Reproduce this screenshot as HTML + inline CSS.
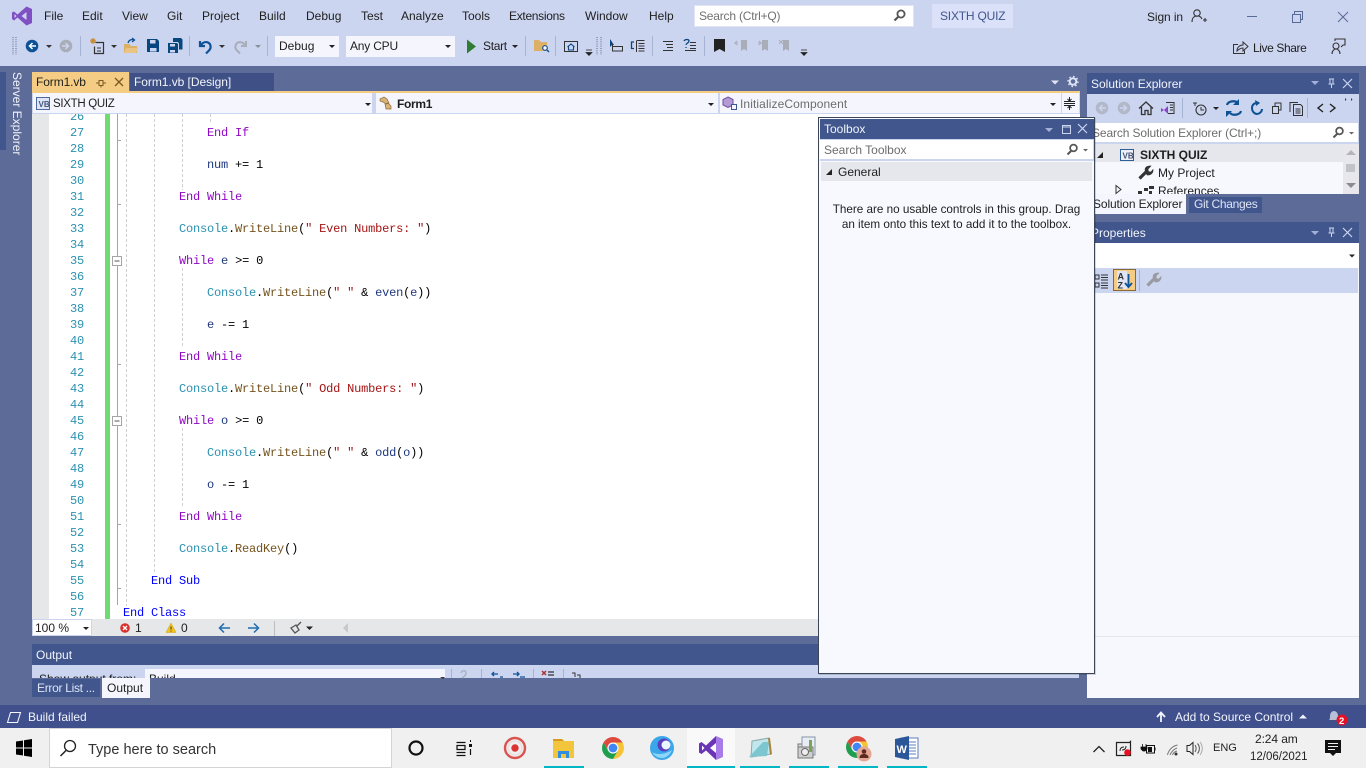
<!DOCTYPE html>
<html lang="en"><head><meta charset="utf-8"><title>SIXTH QUIZ - Visual Studio</title>
<style>
*{box-sizing:border-box}
html,body{margin:0;padding:0;width:1366px;height:768px;overflow:hidden;background:#5d6b99}
body{position:relative;font:12px "Liberation Sans",sans-serif;color:#1e1e1e}
.a{position:absolute}
.t{position:absolute;white-space:nowrap;line-height:16px;height:16px;font-size:12px}
.w{color:#f2f4fb}
.code{position:absolute;margin:0;font:12px/16px "Liberation Mono",monospace;letter-spacing:-.2px;color:#000}
.k{color:#8f08c4}.b{color:#0000ff}.c{color:#2b91af}.m{color:#74531f}.v{color:#1f377f}.s{color:#a31515}
svg{position:absolute;left:0;top:0;overflow:visible}
</style></head><body>

<!-- chrome bands -->
<div class="a" style="left:0;top:0;width:1366px;height:66px;background:#ccd5f0"></div>

<!-- menu -->
<span class="t" style="left:44px;top:8px">File</span>
<span class="t" style="left:82px;top:8px">Edit</span>
<span class="t" style="left:122px;top:8px">View</span>
<span class="t" style="left:167px;top:8px">Git</span>
<span class="t" style="left:202px;top:8px">Project</span>
<span class="t" style="left:259px;top:8px">Build</span>
<span class="t" style="left:306px;top:8px">Debug</span>
<span class="t" style="left:361px;top:8px">Test</span>
<span class="t" style="left:401px;top:8px">Analyze</span>
<span class="t" style="left:462px;top:8px">Tools</span>
<span class="t" style="left:509px;top:8px;letter-spacing:-.3px">Extensions</span>
<span class="t" style="left:585px;top:8px">Window</span>
<span class="t" style="left:649px;top:8px">Help</span>
<div class="a" style="left:694px;top:5px;width:220px;height:22px;background:#fff;border:1px solid #dfe3f2"></div>
<span class="t" style="left:699px;top:8px;color:#717171;letter-spacing:-.2px">Search (Ctrl+Q)</span>
<div class="a" style="left:932px;top:4px;width:81px;height:24px;background:#dae1f8"></div>
<span class="t" style="left:940px;top:8px;color:#40568d;letter-spacing:-.2px">SIXTH QUIZ</span>
<span class="t" style="left:1147px;top:9px;letter-spacing:-.1px">Sign in</span>

<!-- toolbar combos -->
<div class="a" style="left:275px;top:36px;width:64px;height:21px;background:#f5f6fd"></div>
<span class="t" style="left:279px;top:38px">Debug</span>
<div class="a" style="left:346px;top:36px;width:109px;height:21px;background:#f5f6fd"></div>
<span class="t" style="left:350px;top:38px;letter-spacing:-.2px">Any CPU</span>
<span class="t" style="left:483px;top:38px;letter-spacing:-.3px">Start</span>
<span class="t" style="left:1253px;top:40px;letter-spacing:-.4px">Live Share</span>

<!-- left strip -->
<div class="a" style="left:0;top:72px;width:6px;height:78px;background:#40568d"></div>
<div class="a" style="left:9px;top:72px;width:16px;height:78px;writing-mode:vertical-rl;color:#f2f4fb;font-size:12px;line-height:16px;white-space:nowrap">Server Explorer</div>

<!-- doc tabs -->
<div class="a" style="left:32px;top:72px;width:97px;height:20px;background:#f5cc84"></div>
<span class="t" style="left:36px;top:74px;letter-spacing:-.1px">Form1.vb</span>
<div class="a" style="left:130px;top:73px;width:144px;height:18px;background:#3e5085"></div>
<span class="t w" style="left:134px;top:74px;letter-spacing:-.05px">Form1.vb [Design]</span>
<div class="a" style="left:32px;top:91px;width:1048px;height:2px;background:#f5cc84"></div>

<!-- nav bar -->
<div class="a" style="left:32px;top:93px;width:1048px;height:21px;background:#ccd5f0"></div>
<div class="a" style="left:33px;top:93px;width:339px;height:20px;background:#f5f6fd"></div>
<div class="a" style="left:376px;top:93px;width:342px;height:20px;background:#f5f6fd"></div>
<div class="a" style="left:720px;top:93px;width:341px;height:20px;background:#f5f6fd"></div>
<div class="a" style="left:1062px;top:93px;width:17px;height:20px;background:#f5f6fd"></div>
<span class="t" style="left:53px;top:96px;font-size:11.5px;letter-spacing:-.3px">SIXTH QUIZ</span>
<span class="t" style="left:397px;top:96px;font-weight:bold;letter-spacing:-.3px">Form1</span>
<span class="t" style="left:740px;top:96px;color:#6d6d6d;letter-spacing:.1px">InitializeComponent</span>

<!-- editor -->
<div class="a" style="left:32px;top:114px;width:1048px;height:505px;background:#fff;overflow:hidden">
  <div class="a" style="left:0;top:0;width:17px;height:505px;background:#e6e7e8"></div>
  <div class="a" style="left:73px;top:0;width:5px;height:505px;background:#6fdc6f"></div>
  <pre class="code" style="left:17px;top:-5px;width:35px;text-align:right;color:#2b91af">26
27
28
29
30
31
32
33
34
35
36
37
38
39
40
41
42
43
44
45
46
47
48
49
50
51
52
53
54
55
56
57</pre>
  <pre class="code" style="left:91px;top:-5px">

            <span class="k">End If</span>

            <span class="v">num</span> += 1

        <span class="k">End While</span>

        <span class="c">Console</span>.<span class="m">WriteLine</span>(<span class="s">" Even Numbers: "</span>)

        <span class="k">While</span> <span class="v">e</span> &gt;= 0

            <span class="c">Console</span>.<span class="m">WriteLine</span>(<span class="s">" "</span> &amp; <span class="v">even</span>(<span class="v">e</span>))

            <span class="v">e</span> -= 1

        <span class="k">End While</span>

        <span class="c">Console</span>.<span class="m">WriteLine</span>(<span class="s">" Odd Numbers: "</span>)

        <span class="k">While</span> <span class="v">o</span> &gt;= 0

            <span class="c">Console</span>.<span class="m">WriteLine</span>(<span class="s">" "</span> &amp; <span class="v">odd</span>(<span class="v">o</span>))

            <span class="v">o</span> -= 1

        <span class="k">End While</span>

        <span class="c">Console</span>.<span class="m">ReadKey</span>()

    <span class="b">End Sub</span>

<span class="b">End Class</span></pre>
</div>

<!-- editor status -->
<div class="a" style="left:32px;top:619px;width:1048px;height:17px;background:#e6e7e8"></div>
<div class="a" style="left:33px;top:620px;width:58px;height:15px;background:#fff;outline:1px solid #ccd5f0"></div>
<span class="t" style="left:35px;top:620px">100 %</span>
<span class="t" style="left:135px;top:620px">1</span>
<span class="t" style="left:181px;top:620px">0</span>

<!-- output -->
<div class="a" style="left:32px;top:644px;width:1047px;height:21px;background:#40568d"></div>
<span class="t w" style="left:36px;top:647px">Output</span>
<div class="a" style="left:32px;top:665px;width:1047px;height:13px;background:#ccd5f0;overflow:hidden">
  <span class="t" style="left:7px;top:6px">Show output from:</span>
  <div class="a" style="left:113px;top:4px;width:300px;height:20px;background:#f5f6fd"></div>
  <span class="t" style="left:117px;top:6px">Build</span>
</div>
<div class="a" style="left:32px;top:679px;width:68px;height:18px;background:#40568d"></div>
<span class="t" style="left:37px;top:680px;color:#dfe5f6;letter-spacing:-.3px">Error List ...</span>
<div class="a" style="left:102px;top:678px;width:48px;height:20px;background:#f5f6fd"></div>
<span class="t" style="left:107px;top:680px">Output</span>

<!-- solution explorer -->
<div class="a" style="left:1087px;top:73px;width:272px;height:21px;background:#40568d"></div>
<span class="t w" style="left:1091px;top:76px">Solution Explorer</span>
<div class="a" style="left:1087px;top:94px;width:272px;height:29px;background:#ccd5f0"></div>
<div class="a" style="left:1087px;top:123px;width:272px;height:21px;background:#ccd5f0"></div>
<div class="a" style="left:1090px;top:123px;width:268px;height:19px;background:#fff"></div>
<span class="t" style="left:1092px;top:125px;color:#6d6d6d;letter-spacing:-.12px">Search Solution Explorer (Ctrl+;)</span>
<div class="a" style="left:1087px;top:144px;width:272px;height:50px;background:#f6f8fe;overflow:hidden">
  <div class="a" style="left:0;top:0;width:256px;height:18px;background:#e6e7ed"></div>
  <div class="a" style="left:256px;top:0;width:16px;height:50px;background:#e8e8ec"></div>
  <span class="t" style="left:53px;top:3px;font-weight:bold">SIXTH QUIZ</span>
  <span class="t" style="left:71px;top:21px">My Project</span>
  <span class="t" style="left:71px;top:39px">References</span>
</div>
<div class="a" style="left:1087px;top:194px;width:99px;height:20px;background:#f5f6fd"></div>
<span class="t" style="left:1093px;top:196px;letter-spacing:-.12px">Solution Explorer</span>
<div class="a" style="left:1189px;top:197px;width:73px;height:16px;background:#40568d"></div>
<span class="t" style="left:1194px;top:196px;color:#dfe5f6;letter-spacing:-.3px">Git Changes</span>

<!-- properties -->
<div class="a" style="left:1087px;top:222px;width:272px;height:21px;background:#40568d"></div>
<span class="t w" style="left:1091px;top:225px">Properties</span>
<div class="a" style="left:1087px;top:243px;width:272px;height:455px;background:#f6f8fe"></div>
<div class="a" style="left:1087px;top:243px;width:272px;height:25px;background:#fff"></div>
<div class="a" style="left:1087px;top:268px;width:271px;height:25px;background:#ccd5f0"></div>
<div class="a" style="left:1087px;top:636px;width:272px;height:1px;background:#e6e7ed"></div>

<!-- status bar -->
<div class="a" style="left:0;top:705px;width:1366px;height:23px;background:#40508c"></div>
<span class="t w" style="left:28px;top:709px">Build failed</span>
<span class="t w" style="left:1175px;top:709px">Add to Source Control</span>

<!-- taskbar -->
<div class="a" style="left:0;top:728px;width:1366px;height:40px;background:#f0f0f0"></div>
<div class="a" style="left:49px;top:728px;width:343px;height:40px;background:#fff;border:1px solid #d4d4d4"></div>
<span class="t" style="left:88px;top:741px;font-size:14.5px;line-height:18px;height:18px;color:#333">Type here to search</span>
<div class="a" style="left:687px;top:728px;width:48px;height:40px;background:#f9f9f9"></div>
<span class="t" style="left:1213px;top:740px;color:#222;font-size:11px">ENG</span>
<span class="t" style="left:1255px;top:731px;color:#222;letter-spacing:-.1px">2:24 am</span>
<span class="t" style="left:1250px;top:749px;color:#222;font-size:11.5px">12/06/2021</span>

<!-- icons -->
<svg width="1366" height="768" viewBox="0 0 1366 768" fill="none">
  <!-- VS logo -->
  <g transform="translate(12 6)">
    <path fill="#7f4fc4" fill-rule="evenodd" d="M14.5 0.5L20 3V17L14.5 19.5L5.5 11.5L2 14.5L0 13V6.5L2 5.5L5.5 8.5ZM14.5 6L9.5 10L14.5 14ZM2.5 8V12L4.5 10Z"/>
  </g>
  <!-- search -->
  <circle cx="901" cy="14" r="3.6" stroke="#555" stroke-width="1.8"/><path d="M898 17L894.5 20.5" stroke="#555" stroke-width="2.2"/>
  <!-- sign in, window buttons -->
  <circle cx="1197" cy="13" r="3.2" stroke="#333" stroke-width="1.1"/><path d="M1192 22c0-4 2-6 5-6s4 1 5 3M1203 20h4M1205 18v4" stroke="#333" stroke-width="1.1"/>
  <path d="M1247 16.5h10" stroke="#5a6a96" stroke-width="1"/>
  <path d="M1292.5 14.5h8v8h-8zM1294.5 14v-2.5h8v8h-2" stroke="#5a6a96" stroke-width="1"/>
  <path d="M1338 12l10 10M1348 12l-10 10" stroke="#5a6a96" stroke-width="1"/>
  <!-- toolbar grips -->
  <path d="M13 37v18M16 37v18" stroke="#7c86a8" stroke-width="1.4" stroke-dasharray="1 1.2"/>
  <path d="M597 37v18M601 37v18" stroke="#7c86a8" stroke-width="1.4" stroke-dasharray="1 1.2"/>
  <!-- separators -->
  <path d="M80.5 36v20M189.5 36v20M267.5 36v20M525.5 36v20M555.5 36v20M652.5 36v20M704.5 36v20" stroke="#a7b3d3"/>
  <!-- back / forward -->
  <circle cx="32" cy="46" r="6.3" fill="#0e5296"/><path d="M36 46h-6M32.5 43l-3 3 3 3" stroke="#fff" stroke-width="1.5"/>
  <path d="M46 45h6l-3 3z" fill="#333"/>
  <circle cx="66" cy="46" r="6.3" fill="#a9adb8"/><path d="M62 46h6M65.5 43l3 3-3 3" stroke="#ccd5f0" stroke-width="1.5"/>
  <!-- new project -->
  <path d="M95.5 42.5h8v11h-9v-7" stroke="#333" stroke-width="1.2"/><path d="M97 48h4M97 51h4" stroke="#333"/><path d="M93 38v6M90 41h6M91 39l4 4M95 39l-4 4" stroke="#c98a2f" stroke-width="1.2"/>
  <path d="M111 45h6l-3 3z" fill="#333"/>
  <!-- open -->
  <path d="M124 44h5l2 2h6v7h-13z" fill="#dcb067"/><path d="M124 53l2-5h12l-2 5z" fill="#e9c484"/><path d="M128 43c1-3 3-4 6-3M132 38l2.5 2-2.5 2" stroke="#0e5296" stroke-width="1.3"/>
  <!-- save -->
  <path fill="#07467f" d="M147 39h10l2 2v11h-12zM150 40v3.500h5.500V40zM150 48v3.500h6.500V48z" fill-rule="evenodd"/>
  <path fill="#07467f" fill-rule="evenodd" d="M168 43h9l1 1v9h-10zM170 44v2.500h5V44zM170 50v2.500h5V50z"/>
  <path fill="#07467f" d="M173 38h8l1.500 1.500v10H179v-6l-1-1.500h-5z"/>
  <!-- undo -->
  <path d="M200 41v5h5M200.500 45.500c2-3 5-4 7.500-3 3 1.500 3.500 5.500 1 8l-3 3" stroke="#0e5296" stroke-width="2.200"/>
  <path d="M219 45h6l-3 3z" fill="#333"/>
  <path d="M246 41v5h-5M245.500 45.500c-2-3-5-4-7.500-3-3 1.500-3.500 5.500-1 8l3 3" stroke="#a9adb8" stroke-width="2"/>
  <path d="M255 45h6l-3 3z" fill="#8a8fa0"/>
  <!-- combo arrows -->
  <path d="M329 45h6l-3 3zM445 45h6l-3 3zM512 45h6l-3 3z" fill="#222"/>
  <!-- start -->
  <path d="M467 39.500l9 7-9 7z" fill="#2f7d32"/>
  <!-- find folder -->
  <path d="M534 40h5l2 2h6v9h-13z" fill="#dcb067"/><circle cx="545" cy="48" r="2.300" fill="#fff" stroke="#0e5296" stroke-width="1.200"/><path d="M547 50l2 2" stroke="#0e5296" stroke-width="1.400"/>
  <!-- home box -->
  <path d="M564.500 41.500h13v10h-13z" stroke="#333"/><path d="M567.500 47l3.500-3 3.500 3M568.500 46.500v3.500h5v-3.500" stroke="#07467f" stroke-width="1.100"/>
  <path d="M586 50h6M586 52.500h6l-3 3z" stroke="#222" fill="#222" stroke-width=".7"/>
  <!-- cursors / panels -->
  <path d="M610 39v8l2-2 2 0z" fill="#07467f"/><path d="M612.500 46.500h10v4.500h-10zM612.500 44v3" stroke="#333"/>
  <path d="M636.500 40.500h8M638.500 43.500h6M638.500 46h6M638.500 48.500h6M638.500 51h6M636.500 41v11" stroke="#333"/><path d="M634 42h-2.500v6.500h2.500" stroke="#07467f" stroke-width="1.300"/>
  <path d="M663 41.500h10M666 44.500h7M667 47.500h6M663 50.500h10" stroke="#333"/>
  <path d="M684 41c1-2 5-2 5 0s-3 2-3 4M686 47v1" stroke="#07467f" stroke-width="1.300"/><path d="M690 42.500h6M690 45.500h6M690 48.500h6M685 50.500h11" stroke="#333"/>
  <!-- bookmarks -->
  <path d="M714 39h11v13l-5.500-3-5.500 3z" fill="#222"/>
  <path d="M741 40h6v11l-3-2-3 2z" fill="#a9adb8"/><path d="M738 43h-3l2-2M735 43l2 2" stroke="#a9adb8"/>
  <path d="M762 40h6v11l-3-2-3 2z" fill="#a9adb8"/><path d="M758 43h3l-2-2M761 43l-2 2" stroke="#a9adb8"/>
  <path d="M783 40h6v11l-3-2-3 2z" fill="#a9adb8"/><path d="M779 40l4 4M783 40l-4 4" stroke="#a9adb8"/>
  <path d="M801 50h6M801 52.500h6l-3 3z" stroke="#222" fill="#222" stroke-width=".7"/>
  <!-- live share -->
  <path d="M1238 44.500h-4.500v9h11v-3" stroke="#333"/><path d="M1237 51c0-4 3-6 6-6v-3l5 4.500-5 4.500v-3c-2 0-4 1-6 3z" stroke="#333"/>
  <!-- feedback -->
  <circle cx="1336" cy="46" r="3" stroke="#333" stroke-width="1.100"/><path d="M1332 54c0-3 2-5 4-5s4 2 4 5M1335 41v-2h10v6h-2l-2 2" stroke="#333" stroke-width="1.100"/>
  <!-- tab glyphs -->
  <path d="M96 83h3M99 80.500v5h4v-5zM103 83h3M101 85.500v2" stroke="#7a5a20"/>
  <path d="M115 78l8 8M123 78l-8 8" stroke="#7a5a20" stroke-width="1.300"/>
  <path d="M1051 80.500h8l-4 4z" fill="#dfe5f6"/>
  <circle cx="1073" cy="81.500" r="3.300" stroke="#dfe5f6" stroke-width="2"/><circle cx="1073" cy="81.500" r="5" stroke="#dfe5f6" stroke-width="1.400" stroke-dasharray="1.600 2.300"/>
  <!-- nav bar icons -->
  <path d="M36.500 97.500h13v12h-13z" stroke="#4d6a9e" fill="#dfe5f6"/><text x="38.500" y="107" font-family="Liberation Sans" font-size="8" font-weight="bold" fill="#44587f">VB</text>
  <path d="M365 103h6l-3 3zM708 103h6l-3 3zM1050 103h6l-3 3z" fill="#222"/>
  <path d="M380 99l4-2 3 2 2 4-3 1-3-2-3-1zM385 104l3-1 3 3v3h-5z" fill="#d9b27a" stroke="#8a6a33" stroke-width=".7"/>
  <path d="M728 97l5 2.500v5.500l-5 2.500-5-2.500v-5.500z" fill="#b49bd6" stroke="#6b4fa0"/><path d="M731.500 104.500h5v5h-5z" fill="#f5f6fd" stroke="#40568d"/>
  <path d="M1064 103.500h11" stroke="#222"/><path d="M1064 101.500h11M1064 105.500h11" stroke="#222"/><path d="M1069.500 97v4M1069.500 106v4M1067.500 99l2 2 2-2M1067.500 108l2-2 2 2" stroke="#222"/>
  <!-- editor margin -->
  <path d="M117.500 114v491" stroke="#a5a5a5"/>
  <path d="M117 140.500h4M117 204.500h4M117 364.500h4M117 524.500h4M117 588.500h4" stroke="#a5a5a5"/>
  <path d="M112.500 256.500h9v9h-9zM112.500 416.500h9v9h-9z" fill="#fff" stroke="#a5a5a5"/><path d="M114.500 261h5M114.500 421h5" stroke="#555"/>
  <path d="M126.500 114v492M154.500 114v460M182.500 114v76M182.500 268v80M182.500 428v80M210.500 114v10" stroke="#cfcfcf" stroke-dasharray="3 2"/>
  <!-- editor status -->
  <path d="M83 627h6l-3 3z" fill="#222"/>
  <circle cx="125" cy="628" r="4.800" fill="#d9302c"/><path d="M123 626l4 4M127 626l-4 4" stroke="#fff" stroke-width="1.300"/>
  <path d="M171 623l5 9.500h-10z" fill="#f2c21d" stroke="#caa010" stroke-width=".5"/><path d="M171 626.500v3M171 630.500v1" stroke="#333"/>
  <path d="M230 628h-10M224 623.500l-4.500 4.500 4.500 4.500" stroke="#1f6eb0" stroke-width="1.500"/>
  <path d="M248 628h10M254 623.500l4.500 4.500-4.500 4.500" stroke="#1f6eb0" stroke-width="1.500"/>
  <path d="M274.500 621v15" stroke="#bcbcc2"/>
  <path d="M291 628l5-3 3 5-4 3zM297 626l4-4" stroke="#555" stroke-width="1.300"/>
  <path d="M306 626.500h7l-3.500 3.500z" fill="#222"/>
  <path d="M348 623v10l-5-5z" fill="#c8c8cc"/>
  <!-- output toolbar -->
  <path d="M440 677h5l-2 2z" fill="#333"/>
  <path d="M451.500 669v9M481.500 669v9M533.500 669v9M563.500 669v9" stroke="#a7b3d3"/>
  <path d="M461 673c1-3 5-3 5 0s-3 4-4 5" stroke="#a9adb8" stroke-width="1.300"/>
  <path d="M498 674h-6M494 672l-2 2 2 2M500 677h3M513 674h6M517 672l2 2-2 2M520 677h5" stroke="#0e5296" stroke-width="1.300"/>
  <path d="M542 671l4 4M546 671l-4 4" stroke="#a33" stroke-width="1.500"/><path d="M548 672h6M548 675h6" stroke="#333" stroke-width="1.300"/>
  <path d="M572 673h3v4M577 675h3v3" stroke="#333"/>
  <!-- solution explorer -->
  <path d="M1311 81h8l-4 4z" fill="#a3b1da"/>
  <path d="M1329 79h5M1330 79v5h3v-5M1328.500 84h6M1331.500 84v4" stroke="#ccd5f0"/>
  <path d="M1343 79l9 9M1352 79l-9 9" stroke="#ccd5f0" stroke-width="1.200"/>
  <circle cx="1102" cy="108" r="6.300" fill="#b2b8c9"/><path d="M1106 108h-6M1102.500 105l-3 3 3 3" stroke="#ccd5f0" stroke-width="1.500"/>
  <circle cx="1124" cy="108" r="6.300" fill="#b2b8c9"/><path d="M1120 108h6M1123.500 105l3 3-3 3" stroke="#ccd5f0" stroke-width="1.500"/>
  <path d="M1139 108.500l7-6.500 7 6.500M1141.500 107v7.500h3.500v-4h3v4h3V107" stroke="#333" stroke-width="1.300"/>
  <path d="M1166 102.500h8v11h-6" stroke="#333"/><path d="M1161 108l3 2 4-4v8l-4-4-3 2z" fill="#8a45c4"/><path d="M1170 105h3M1170 107.500h3M1170 110h3" stroke="#333"/>
  <path d="M1182.500 98v20M1307.500 98v20" stroke="#a7b3d3"/>
  <circle cx="1201" cy="110" r="5" stroke="#333" stroke-width="1.100"/><path d="M1201 107v3h3M1193 103h4M1195 103v3" stroke="#333"/>
  <path d="M1213 107h6l-3 3z" fill="#222"/>
  <path d="M1227 105c1-4 8-5 11-2M1241 111c-1 4-8 5-11 2" stroke="#0e5296" stroke-width="2.200"/><path d="M1239 99v6h-6zM1226 117v-6h6z" fill="#0e5296"/>
  <path d="M1259 103c-3-1-7 1-7 5s3 6 5 6 5-2 5-5" stroke="#0e5296" stroke-width="2"/><path d="M1255 100l5 3-4 3z" fill="#0e5296"/>
  <path d="M1272.500 106.500h6v7h-6zM1275 106v-3h6v7h-2" stroke="#333"/>
  <path d="M1293.500 104.500h7l2 2v9h-9zM1290 112v-9.500h8M1295.500 109h5M1295.500 111h5M1295.500 113h5" stroke="#333"/>
  <path d="M1323 104l-5 4 5 4M1330 104l5 4-5 4" stroke="#222" stroke-width="1.400"/>
  <path d="M1345 98v3l1.500-1.500zM1351 98v3l1.500-1.500z" fill="#333"/>
  <!-- SE search, tree -->
  <circle cx="1339.500" cy="131" r="3.400" stroke="#555" stroke-width="1.700"/><path d="M1337 134l-3.500 3.500" stroke="#555" stroke-width="2"/>
  <path d="M1349 132h5l-2.500 2.500z" fill="#666"/>
  <path d="M1097 158h6v-6z" fill="#222"/>
  <path d="M1120.500 149.500h13v11h-13z" stroke="#2c5f99" fill="#eef1fa"/><text x="1122.500" y="158.500" font-family="Liberation Sans" font-size="8" font-weight="bold" fill="#40506f">VB</text>
  <path d="M1139.500 178.500l7.500-7.500" stroke="#333" stroke-width="3.200"/>
  <path d="M1145 170c0-3 3-4.500 6-4l-3 3 .5 2.500 2.500.5 2-2.500c.5 3-2 6-6 5.500z" fill="#333" stroke="#333" stroke-width=".6"/>
  <path d="M1116 185.500l5 4-5 4z" fill="#f6f8fe" stroke="#333"/>
  <path fill="#333" d="M1138 191h4v3h-4zM1144 188h4v3h-4zM1149 186h5v3h-5zM1149 191h3v3h-3z"/>
  <path d="M1346 155l5-5 5 5z" fill="#b4b4bc"/><path d="M1346 164h9v8h-9z" fill="#c2c3c9"/><path d="M1346 183h10l-5 5z" fill="#8a8a92"/>
  <!-- properties -->
  <path d="M1311 231h8l-4 4z" fill="#a3b1da"/>
  <path d="M1329 228h5M1330 228v5h3v-5M1328.500 233h6M1331.500 233v4" stroke="#ccd5f0"/>
  <path d="M1343 228l9 9M1352 228l-9 9" stroke="#ccd5f0" stroke-width="1.200"/>
  <path d="M1349 254.500h6l-3 3z" fill="#222"/>
  <path d="M1095 275h4v4h-4zM1095 283h4v4h-4z" stroke="#333"/><path d="M1101 275h7M1101 277.500h7M1101 280h7M1101 283h7M1101 285.500h7M1101 288h7" stroke="#333"/>
  <path d="M1113.500 269.500h22v21h-22z" fill="#f5cc84" stroke="#8a6a33"/>
  <path d="M1117 271h10v18h-10z" fill="#dfe5f6"/>
  <text x="1117.500" y="279.500" font-family="Liberation Sans" font-size="9" font-weight="bold" fill="#333">A</text>
  <text x="1117.500" y="288.500" font-family="Liberation Sans" font-size="9" font-weight="bold" fill="#333">Z</text>
  <path d="M1128.500 274v12M1125 283l3.500 4 3.500-4" stroke="#0e5296" stroke-width="1.800"/>
  <path d="M1139.500 270v21" stroke="#a7b3d3"/>
  <path d="M1147.500 285.500l7.500-7.500" stroke="#9a9aa2" stroke-width="3.200"/>
  <path d="M1153 277c0-3 3-4.500 6-4l-3 3 .5 2.500 2.500.5 2-2.500c.5 3-2 6-6 5.500z" fill="#9a9aa2" stroke="#9a9aa2" stroke-width=".6"/>
  <!-- status bar -->
  <path d="M7.500 722.500l3-10h10l-3 10z" stroke="#f2f4fb" stroke-width="1.100"/>
  <path d="M1161 722v-9M1157 717l4-4.500 4 4.500" stroke="#f2f4fb" stroke-width="1.800"/>
  <path d="M1299 718.500h8l-4-4z" fill="#f2f4fb"/>
  <path d="M1329 720c1-1 1-2 1-4 0-3 2-5 4-5s4 2 4 5c0 2 0 3 1 4z" fill="#b8c0d8"/>
  <circle cx="1342" cy="720" r="5.500" fill="#e81123"/>
  <text x="1339" y="724" font-family="Liberation Sans" font-size="9.500" font-weight="bold" fill="#fff">2</text>
  <!-- taskbar -->
  <path fill="#000" d="M16 741.500l7-1v7h-7zM24 740.300l8-1.300v8.500h-8zM16 748.500h7v7l-7-1zM24 748.500h8v8.500l-8-1.200z"/>
  <circle cx="70" cy="746" r="5.500" stroke="#222" stroke-width="1.300"/><path d="M66 750.500l-5.500 5.500" stroke="#222" stroke-width="1.500"/>
  <circle cx="416" cy="748" r="6.500" stroke="#111" stroke-width="2.200"/>
  <path d="M456.500 742.500h9M456.500 752.500h9M457 745.500h8v4h-8zM456.500 755.500h9M470.500 749v6" stroke="#111" stroke-width="1.200"/><path d="M469 744h3v3h-3z" fill="#111"/><path d="M470.500 740v2" stroke="#111"/>
  <circle cx="515" cy="748" r="10" stroke="#d9534f" stroke-width="2.400"/><circle cx="515" cy="748" r="7" stroke="#e9e0e0" stroke-width="1.600"/><circle cx="515" cy="748" r="3.700" fill="#d33"/>
  <path d="M553 739h9l2 2h10v17h-21z" fill="#f3c53c"/><path d="M553 739h9l2 2h-11z" fill="#d49b1c"/><path d="M558 755v-4h11v7h-3v-4h-5v4h-3z" fill="#2e8ee0"/>
  <g transform="translate(613 748)">
    <circle r="11" fill="#fff"/>
    <path d="M-9.500-5.500A11 11 0 0 1 9.500-5.500H0A5.500 5.500 0 0 0-4.800 2.800z" fill="#dd4b3e"/>
    <path d="M9.500-5.500A11 11 0 0 1 0 11L4.800 2.800A5.500 5.500 0 0 0 0-5.500z" fill="#f5c436"/>
    <path d="M0 11A11 11 0 0 1-9.500-5.500L-4.800 2.800A5.500 5.500 0 0 0 4.800 2.800z" fill="#1f9e4f"/>
    <circle r="4.400" fill="#4285f4"/>
  </g>
  <circle cx="662" cy="748" r="12" fill="#39a7ea"/><circle cx="664" cy="745" r="6.500" fill="#5a3fc0"/><circle cx="666" cy="745" r="4.500" fill="#eaf6ff"/><path d="M652 752c4 3 12 3 20-2-2 5-6 8-10 8s-8-2-10-6z" fill="#8ed6f8"/>
  <g transform="translate(699 736)">
    <path fill="#a77ce8" d="M17 0l7 3v18l-7 3V0z"/>
    <path fill="#6a35b5" fill-rule="evenodd" d="M17 0V7l-6 5 6 5v7L7 14.500 2.500 18 0 16.500v-9L2.500 6 7 9.500ZM3 9.500v5l2.500-2.500Z"/>
  </g>
  <path d="M752 741l17-3 2 16-20 3z" fill="#bfe7ec" stroke="#8fa6ad"/><path d="M749 757l14-15 6 0-2 14z" fill="#7cc7cf"/><path d="M768 738l2 17 2-1-2-16z" fill="#a8853f"/>
  <path d="M798 744h15v14h-15z" fill="#d9d9d9" stroke="#777"/><path d="M802 737h13v18h-13z" fill="#e8edf4" stroke="#8895a8"/><path d="M798 747h15v11h-15z" fill="#cfcfcf" stroke="#777"/><circle cx="805" cy="752" r="3.500" fill="#eee" stroke="#666"/><path d="M809 740h3v12h-3z" fill="#7aa35a"/>
  <g transform="translate(857 747)">
    <circle r="11" fill="#fff"/>
    <path d="M-9.500-5.500A11 11 0 0 1 9.500-5.500H0A5.500 5.500 0 0 0-4.800 2.800z" fill="#dd4b3e"/>
    <path d="M9.500-5.500A11 11 0 0 1 0 11L4.800 2.800A5.500 5.500 0 0 0 0-5.500z" fill="#f5c436"/>
    <path d="M0 11A11 11 0 0 1-9.500-5.500L-4.800 2.800A5.500 5.500 0 0 0 4.800 2.800z" fill="#1f9e4f"/>
    <circle r="4.400" fill="#4285f4"/>
  </g>
  <circle cx="864" cy="754" r="7.500" fill="#e3a793"/><circle cx="864" cy="751.500" r="2.300" fill="#5b2b20"/><path d="M859.500 758c0-3 2-4 4.500-4s4.500 1 4.500 4z" fill="#5b2b20"/>
  <path d="M901 738h17v20h-17z" fill="#fff" stroke="#5a7fbf"/><path d="M908 742h8M908 745h8M908 748h8M908 751h8M908 754h8" stroke="#5a7fbf"/>
  <path d="M895 739l14-3v24l-14-3z" fill="#2b579a"/>
  <text x="896.500" y="753" font-family="Liberation Sans" font-size="11" font-weight="bold" fill="#fff">W</text>
  <path fill="#00b7c3" d="M544 766h40v2h-40zM687 766h48v2h-48zM740 766h40v2h-40zM789 766h40v2h-40zM838 766h40v2h-40zM887 766h40v2h-40z"/>
  <!-- tray -->
  <path d="M1093.500 752l5.500-5.500 5.500 5.500" stroke="#222" stroke-width="1.300"/>
  <path d="M1116.500 742.500h13l1 -1v14h-14z" stroke="#222" stroke-width="1.200"/><path d="M1120 751c0-3 2-4 4-4M1126 746c0 3-2 4-4 4" stroke="#222"/><circle cx="1127.500" cy="752.500" r="3.300" fill="#e81123"/>
  <path d="M1142.500 744v3M1146 744v3M1141 747h6v2l-2 2h-2l-2-2z" fill="#111" stroke="#111" stroke-width=".8"/><path d="M1146.500 745.500h8v7.500h-8zM1155 747.500v3" stroke="#111"/><path d="M1148 747h4v5h-4z" fill="#111"/>
  <path d="M1167.500 755c1-5 5-9 10-10M1170 755c1-3 4-6 7-7M1172.500 755c.7-2 2.500-3.500 4.500-4" stroke="#777" stroke-width="1"/><circle cx="1176" cy="754" r="1.500" fill="#333"/>
  <path d="M1187 745.500h2.500l3.500-3v12l-3.500-3H1187z" stroke="#222"/><path d="M1195 745c1.500 2 1.500 5 0 7M1197.500 743.500c2.500 3 2.500 7 0 10" stroke="#555"/><path d="M1200 742c3 4 3 9 0 13" stroke="#aaa"/>
  <path d="M1325 740h16v13h-5l-3 3-3-3h-5z" fill="#111"/><path d="M1328 743.500h10M1328 746.500h10M1328 749.500h7" stroke="#f0f0f0"/>
</svg>

<!-- Toolbox floating window -->
<div class="a" style="left:818px;top:117px;width:277px;height:557px;background:#f8f9ff;border:1px solid #3c4658;box-shadow:1px 1px 0 rgba(0,0,0,.15)">
  <div class="a" style="left:1px;top:1px;width:274px;height:20px;background:#40568d"></div>
  <span class="t w" style="left:5px;top:3px">Toolbox</span>
  <div class="a" style="left:1px;top:21px;width:274px;height:22px;background:#ccd5f0"></div>
  <div class="a" style="left:1px;top:22px;width:273px;height:19px;background:#fff"></div>
  <span class="t" style="left:5px;top:24px;color:#6d6d6d">Search Toolbox</span>
  <div class="a" style="left:2px;top:44px;width:271px;height:19px;background:#e6e7ed"></div>
  <span class="t" style="left:19px;top:46px">General</span>
  <div class="a" style="left:0;top:84px;width:275px;text-align:center;line-height:15px;font-size:11.7px;color:#1e1e1e">There are no usable controls in this group. Drag<br>an item onto this text to add it to the toolbox.</div>
  <svg width="277" height="557" viewBox="0 0 277 557" fill="none">
    <path d="M226 10h8l-4 4z" fill="#a3b1da"/>
    <path d="M243.500 7.500h8v8h-8zM243.500 9h8" stroke="#ccd5f0"/>
    <path d="M259 6l9 9M268 6l-9 9" stroke="#ccd5f0" stroke-width="1.200"/>
    <circle cx="254.500" cy="30" r="3.400" stroke="#555" stroke-width="1.700"/><path d="M252 33l-3.500 3.500" stroke="#555" stroke-width="2"/>
    <path d="M264 31h5l-2.500 2.500z" fill="#666"/>
    <path d="M7 57h6v-6z" fill="#222"/>
  </svg>
</div>
</body></html>
